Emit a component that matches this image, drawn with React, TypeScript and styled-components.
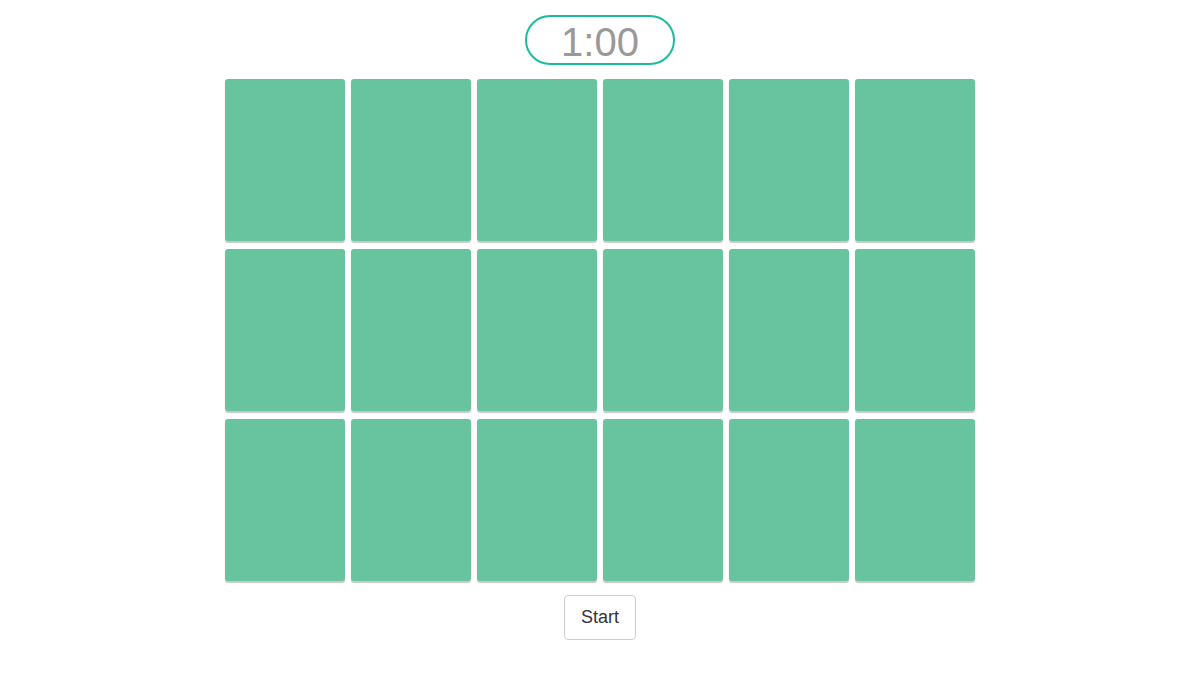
import React from "react";
import styled, { createGlobalStyle } from "styled-components";

const Global = createGlobalStyle`
  html, body { margin: 0; padding: 0; background: #fff; }
  body { font-family: "Liberation Sans", Arial, sans-serif; }
`;

const Page = styled.div`
  display: flex;
  flex-direction: column;
  align-items: center;
  padding-top: 15px;
`;

const Timer = styled.div`
  box-sizing: border-box;
  width: 150px;
  height: 50px;
  padding-top: 4px;
  border: 2px solid #1abc9c;
  border-radius: 25px;
  display: flex;
  align-items: center;
  justify-content: center;
  font-size: 40px;
  color: #999;
  line-height: 1;
`;

const Grid = styled.div`
  margin-top: 14px;
  display: grid;
  grid-template-columns: repeat(6, 120px);
  column-gap: 6px;
  row-gap: 8px;
`;

const Card = styled.div`
  width: 120px;
  height: 162px;
  background: #68c49f;
  border-radius: 3px;
  box-shadow: 0 2px 1px rgba(0, 0, 0, 0.22);
`;

const StartButton = styled.button`
  margin-top: 14px;
  width: 72px;
  height: 45px;
  padding: 0;
  background: #fff;
  border: 1px solid #ccc;
  border-radius: 4px;
  font-family: "Liberation Sans", Arial, sans-serif;
  font-size: 18px;
  color: #333;
  cursor: pointer;
`;

export default function App() {
  return (
    <>
      <Global />
      <Page>
        <Timer>1:00</Timer>
        <Grid>
          {Array.from({ length: 18 }).map((_, i) => (
            <Card key={i} />
          ))}
        </Grid>
        <StartButton>Start</StartButton>
      </Page>
    </>
  );
}
